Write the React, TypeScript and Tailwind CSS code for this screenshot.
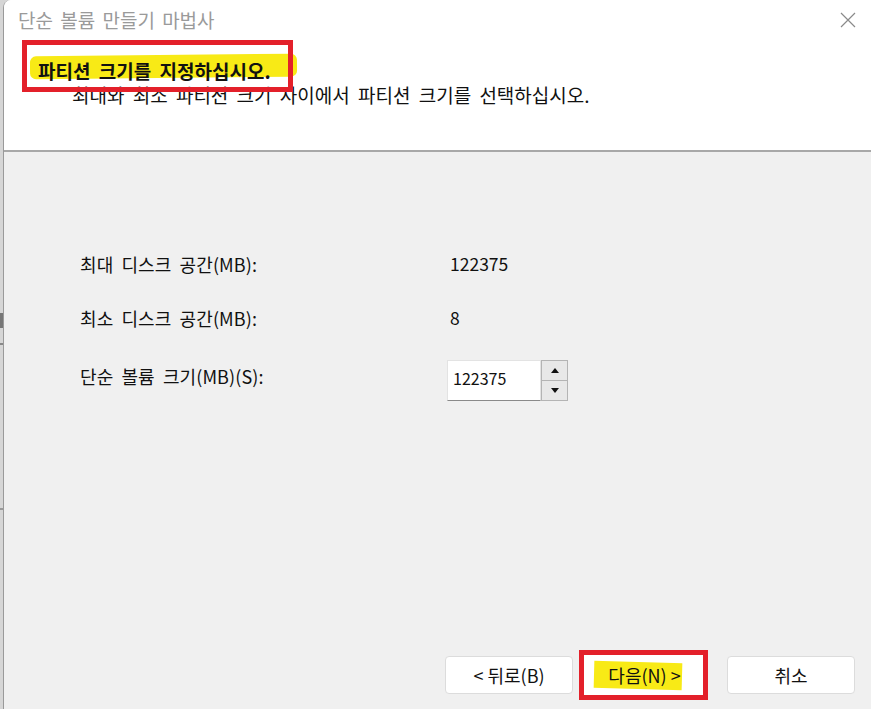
import React from "react";

const font = { fontFamily: '"Noto Sans CJK KR", "Noto Sans", sans-serif' };

const Row = ({ label, children, top }: { label: string; children: React.ReactNode; top?: boolean }) => (
  <>
    <div
      className={
        "flex text-[18px] leading-6 tracking-[0.1px] text-[#111] [word-spacing:4px] " +
        (top ? "items-start pt-[4px]" : "items-center")
      }
    >
      {label}
    </div>
    <div className="flex items-center text-[17.5px] leading-6 text-[#111]">{children}</div>
  </>
);

const Spinner = () => (
  <div className="flex h-[41px]">
    <div className="flex w-[94px] items-center border border-[#e3e3e3] border-b-[#8a8a8a] bg-white pb-[5px] pl-[5px] text-[16px] text-[#111]">
      122375
    </div>
    <div className="flex w-[27px] flex-col border border-[#b4b4b4] bg-[#e8e8e8]">
      <button className="flex flex-1 items-center justify-center border-b border-[#b4b4b4]">
        <svg width="8" height="5" viewBox="0 0 8 5">
          <path d="M0 5 L4 0 L8 5 Z" fill="#111" />
        </svg>
      </button>
      <button className="flex flex-1 items-center justify-center">
        <svg width="8" height="5" viewBox="0 0 8 5">
          <path d="M0 0 L4 5 L8 0 Z" fill="#111" />
        </svg>
      </button>
    </div>
  </div>
);

const Btn = ({ children }: { children: React.ReactNode }) => (
  <button className="flex h-[38px] w-[128px] items-center justify-center rounded-[4px] border border-[#dcdcdc] bg-white text-[18px] text-[#111]">
    {children}
  </button>
);

export default function App() {
  return (
    <div className="flex h-[709px] w-[871px] overflow-hidden bg-[#d6d6d6]" style={font}>
      {/* strip of the screen behind the dialog */}
      <div className="flex w-[3px] flex-col">
        <div className="mt-[313px] h-[15px] bg-[#777]" />
        <div className="mt-[15px] h-[2px] bg-[#888]" />
        <div className="mt-[163px] h-[2px] bg-[#999]" />
      </div>

      <div className="flex flex-1 flex-col overflow-hidden rounded-tl-[8px] border-l border-[#9a9a9a] bg-white">
        {/* header */}
        <div className="relative h-[152px] border-b-2 border-[#a8a8a8] bg-white">
          <div className="flex items-center justify-between pl-[14px] pr-[12px] pt-[8px]">
            <span className="text-[19px] leading-6 text-[#9a9a9a] [word-spacing:3px]">단순 볼륨 만들기 마법사</span>
            <svg width="16" height="16" viewBox="0 0 16 16" className="mr-[3px]">
              <path d="M1 1 L15 15 M15 1 L1 15" stroke="#8a8a8a" strokeWidth="1.2" />
            </svg>
          </div>

          <div className="absolute left-[26px] top-[55px] h-[23px] w-[267px] -rotate-[0.6deg] rounded-[6px] bg-[#f8ea16]" />
          <div className="relative pl-[34px] pt-[27px] text-[19px] font-bold leading-6 text-[#111] [word-spacing:4px]">
            파티션 크기를 지정하십시오.
          </div>
          <div className="relative pl-[68px] pt-[0px] text-[19px] leading-6 text-[#111] [word-spacing:4px]">
            최대와 최소 파티션 크기 사이에서 파티션 크기를 선택하십시오.
          </div>
          <div className="absolute left-[18px] top-[40px] h-[52px] w-[271px] border-[5px] border-[#e3202a]" />
        </div>

        {/* body */}
        <div className="flex flex-1 flex-col bg-[#f0f0f0]">
          <div className="grid grid-cols-[367px_auto] gap-y-[30px] pl-[76px] pt-[100px]">
            <Row label="최대 디스크 공간(MB):">
              <span className="pl-[3px]">122375</span>
            </Row>
            <Row label="최소 디스크 공간(MB):">
              <span className="pl-[3px]">8</span>
            </Row>
            <Row label="단순 볼륨 크기(MB)(S):" top>
              <Spinner />
            </Row>
          </div>

          <div className="mt-auto flex items-center justify-end pb-[9px] pr-[16px]">
            <Btn>&lt; 뒤로(B)</Btn>
            <div className="ml-[6px] flex h-[50px] w-[129px] items-center justify-center border-[5px] border-[#e3202a] bg-white">
              <span className="relative pl-[2px] text-[18px] text-[#111]">
                <span className="absolute -left-[12px] -right-[2px] top-[0px] bottom-[0px] rotate-[1.5deg] bg-[#f8ea16]" />
                <span className="relative">다음(N) &gt;</span>
              </span>
            </div>
            <div className="ml-[19px]">
              <Btn>취소</Btn>
            </div>
          </div>
        </div>
      </div>
    </div>
  );
}
